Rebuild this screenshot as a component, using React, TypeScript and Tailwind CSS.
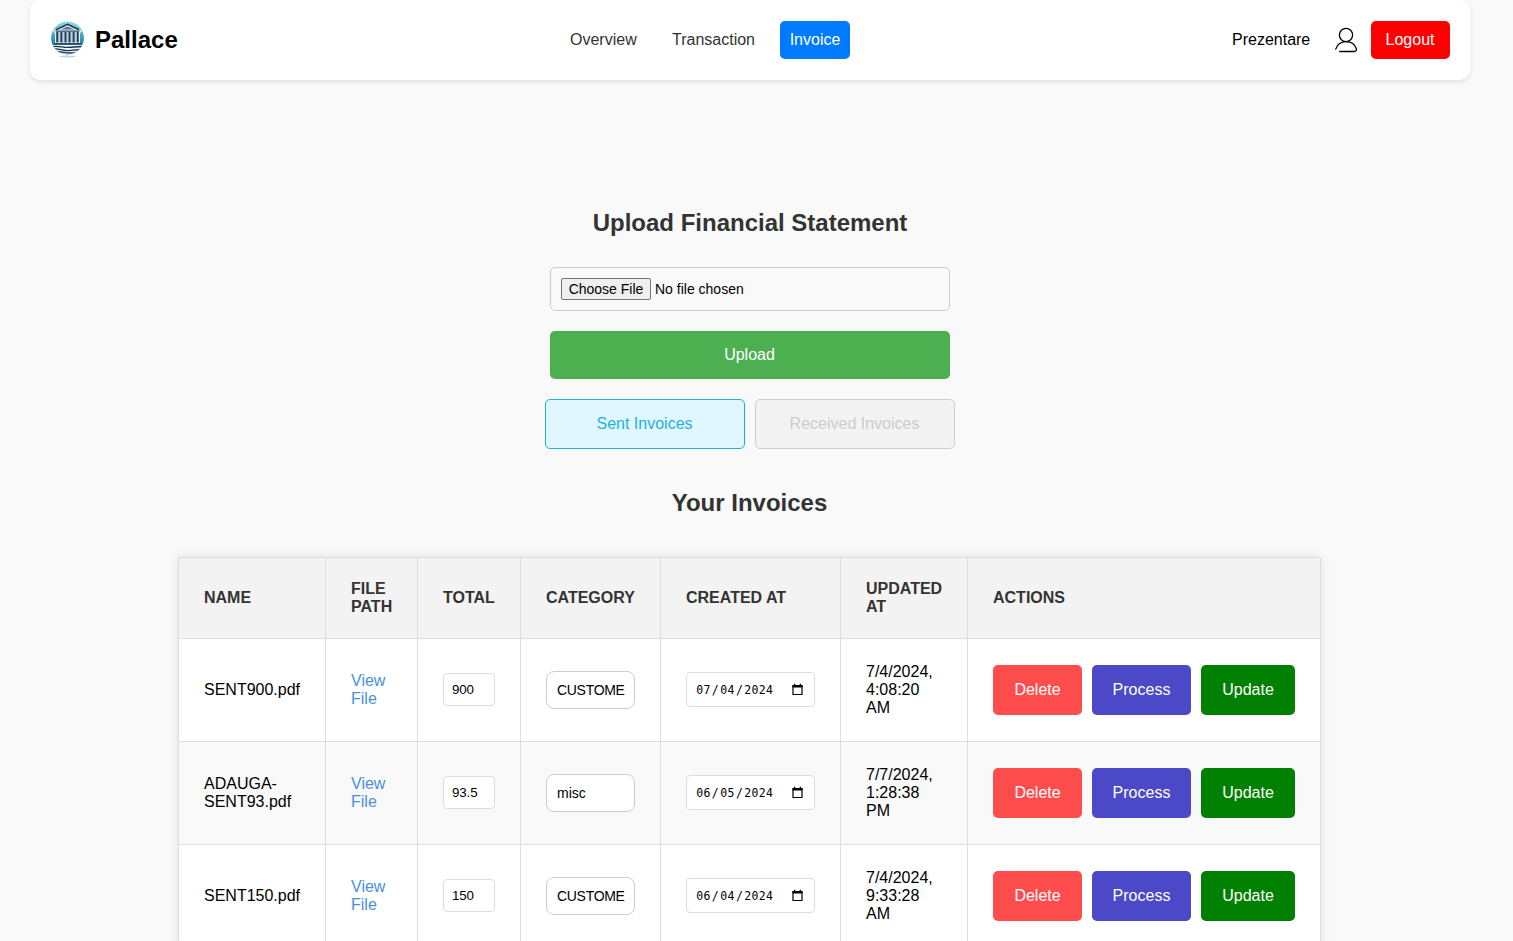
import type { ReactNode } from "react";

interface Invoice {
  name: string[];
  total: string;
  category: string;
  created: string;
  updated: string[];
}

const invoices: Invoice[] = [
  { name: ["SENT900.pdf"], total: "900", category: "CUSTOME", created: "07/04/2024", updated: ["7/4/2024,", "4:08:20", "AM"] },
  { name: ["ADAUGA-", "SENT93.pdf"], total: "93.5", category: "misc", created: "06/05/2024", updated: ["7/7/2024,", "1:28:38", "PM"] },
  { name: ["SENT150.pdf"], total: "150", category: "CUSTOME", created: "06/04/2024", updated: ["7/4/2024,", "9:33:28", "AM"] },
];

const headers: string[][] = [["NAME"], ["FILE", "PATH"], ["TOTAL"], ["CATEGORY"], ["CREATED AT"], ["UPDATED", "AT"], ["ACTIONS"]];

const columns = "grid grid-cols-[147px_92px_103px_140px_180px_127px_353px]";

function Lines({ items }: { items: string[] }) {
  return (
    <div>
      {items.map((line) => (
        <div key={line} className="whitespace-nowrap">{line}</div>
      ))}
    </div>
  );
}

function Cell({ children }: { children: ReactNode }) {
  return <div className="flex items-center border-t border-l border-[#ddd] pl-[25px]">{children}</div>;
}

function Logo() {
  return (
    <svg className="mb-[2px] h-[37px] w-[35px]" viewBox="0 0 35 37" fill="none">
      <defs>
        <linearGradient id="sky" x1="0" y1="0" x2="0" y2="1">
          <stop offset="0" stopColor="#8ce6e4" />
          <stop offset="0.35" stopColor="#4fb3c9" />
          <stop offset="0.7" stopColor="#23799f" />
          <stop offset="1" stopColor="#165478" />
        </linearGradient>
        <clipPath id="disc"><circle cx="17.5" cy="17" r="16.4" /></clipPath>
      </defs>
      <g clipPath="url(#disc)">
        <rect width="35" height="34" fill="url(#sky)" />
        <path d="M3.5 9.5 17.5 1.8l14 7.7v2H30V23H5V11.5H3.5z" fill="#e4f1f6" />
        <path d="M6 8.7 17.5 3.2 29 8.7" stroke="#1d3a54" strokeWidth="1.5" />
        <path d="M10.5 8.6 17.5 5.4l7 3.2z" fill="#56768c" />
        <path d="M5.5 10.2h24" stroke="#2b4a64" strokeWidth="1.2" />
        <path d="M7.3 11v10.5M11.4 11v10.5M15.5 11v10.5M19.5 11v10.5M23.6 11v10.5M27.7 11v10.5" stroke="#1f3d5a" strokeWidth="2.1" />
        <path d="M9.4 11v10.5M13.5 11v10.5M17.5 11v10.5M21.5 11v10.5M25.6 11v10.5" stroke="#a9c3d2" strokeWidth=".7" />
        <path d="M4 22h27v1.6H4z" fill="#2b4a67" />
        <path d="M0 24h35v10H0z" fill="#eef6f9" />
        <path d="M1 25.7c8-1.3 11 .8 17 .7s8-1.2 16-.9M2 28c8-1 11 2.2 17 1.6s8-1.200 13-.8M5 30.5c6-.5 9 2.5 20 1.300" stroke="#18354f" strokeWidth="1.4" />
      </g>
      <ellipse cx="17.5" cy="35.5" rx="8" ry="1" fill="#b8d7e1" />
    </svg>
  );
}

function UserIcon() {
  return (
    <svg className="h-[26px] w-[24px]" viewBox="0 0 24 26" fill="none" stroke="#000" strokeWidth="1.3" strokeLinecap="round">
      <circle cx="12" cy="8" r="6.6" />
      <path d="M1.7 22.1C3.3 17.4 7 14.6 12 14.6c5 0 8.8 2.9 10.3 6.9.6 1.7-.5 3-2.1 3H5.7" />
    </svg>
  );
}

function CalendarIcon() {
  return (
    <svg className="h-[13px] w-[11px]" viewBox="0 0 11 13" fill="none">
      <path d="M1 2.5h9v9H1z" stroke="#000" strokeWidth="1.2" strokeLinejoin="round" />
      <path d="M.5 2h10v2.5H.5zM2 .8h1.3V3H2zM7.7.8H9V3H7.7z" fill="#000" />
    </svg>
  );
}

function DateField({ value }: { value: string }) {
  const [month, day, year] = value.split("/");
  return (
    <div className="mb-px flex h-[35px] w-[129px] items-center justify-between rounded-[4px] border border-[#ddd] bg-white pr-[11px] pl-[8px] font-['DejaVu_Sans_Mono',monospace] text-[11.5px] tracking-[0.3px]">
      <span className="pt-px whitespace-nowrap">
        <span className="px-[1.2px]">{month}</span>/<span className="px-[1.2px]">{day}</span>/<span className="px-[1.2px]">{year}</span>
      </span>
      <CalendarIcon />
    </div>
  );
}

function Header() {
  return (
    <header className="mx-[30px] grid h-[80px] w-[1440px] grid-cols-[540px_1fr_238px] items-center rounded-[10px] bg-white shadow-[0_2px_4px_rgba(0,0,0,0.1)]">
      <div className="flex items-center pl-5">
        <Logo />
        <span className="ml-[10px] text-[24px] leading-[28px] font-bold">Pallace</span>
      </div>
      <nav className="flex items-center text-[#333]">
        <a className="w-[102px]">Overview</a>
        <a className="w-[108px]">Transaction</a>
        <a className="flex h-[38px] w-[70px] items-center justify-center rounded-[5px] bg-[#007bff] text-white">Invoice</a>
      </nav>
      <div className="flex items-center">
        <span className="w-[102px]">Prezentare</span>
        <UserIcon />
        <button className="ml-[13px] h-[38px] w-[79px] rounded-[5px] bg-[#f00] pr-px text-white">Logout</button>
      </div>
    </header>
  );
}

function UploadForm() {
  return (
    <section className="flex w-[1500px] flex-col items-center pt-[129px]">
      <h2 className="text-[24px] leading-[28px] font-bold text-[#333]">Upload Financial Statement</h2>
      <div className="mt-[30px] flex h-[44px] w-[400px] items-center rounded-[5px] border border-[#ccc] pl-[10px] text-[14px]">
        <button className="h-[22px] w-[90px] rounded-[2px] border border-[#767676] bg-[#efefef] leading-[19px] whitespace-nowrap">Choose File</button>
        <span className="ml-[4px]">No file chosen</span>
      </div>
      <button className="mt-5 h-[48px] w-[400px] rounded-[5px] bg-[#4caf50] pr-px text-white">Upload</button>
      <div className="mt-5 flex gap-[10px]">
        <button className="h-[50px] w-[200px] rounded-[5px] border border-[#1fb1dc] bg-[#e0f7ff] pr-px text-[#1fb1dc]">Sent Invoices</button>
        <button className="h-[50px] w-[200px] rounded-[5px] border border-[#ccc] bg-[#f3f3f3] pr-px text-[#ccc]">Received Invoices</button>
      </div>
    </section>
  );
}

function InvoiceTable() {
  return (
    <section className="flex w-[1500px] flex-col pt-[40px]">
      <h2 className="pr-px text-center text-[24px] leading-[28px] font-bold text-[#333]">Your Invoices</h2>
      <div className="mt-[40px] ml-[178px] w-[1143px] border-r border-b border-[#ddd] shadow-[0_0_10px_rgba(0,0,0,0.1)]">
        <div className={`${columns} h-[81px] bg-[#f3f3f3] font-bold text-[#333]`}>
          {headers.map((header) => (
            <Cell key={header[0]}><Lines items={header} /></Cell>
          ))}
        </div>
        {invoices.map((invoice, index) => (
          <div key={invoice.name[0]} className={`${columns} h-[103px] ${index % 2 ? "bg-[#f9f9f9]" : "bg-white"}`}>
            <Cell><Lines items={invoice.name} /></Cell>
            <Cell>
              <a className="text-[#4a90d9]"><Lines items={["View", "File"]} /></a>
            </Cell>
            <Cell>
              <div className="mb-px flex h-[33px] w-[52px] items-center rounded-[4px] border border-[#ddd] bg-white pl-[8px] text-[13.33px] tracking-[-0.1px]">{invoice.total}</div>
            </Cell>
            <Cell>
              <div className="flex h-[38px] w-[89px] items-center rounded-[8px] border border-[#ccc] bg-white pl-[10px] text-[14px]">
                <span className={invoice.category === "misc" ? "" : "tracking-[-0.3px]"}>{invoice.category}</span>
              </div>
            </Cell>
            <Cell><DateField value={invoice.created} /></Cell>
            <Cell><Lines items={invoice.updated} /></Cell>
            <Cell>
              <div className="flex gap-[10px] text-white">
                <button className="h-[50px] w-[89px] rounded-[5px] bg-[#ff4d4d]">Delete</button>
                <button className="h-[50px] w-[99px] rounded-[5px] bg-[#4b49c8]">Process</button>
                <button className="h-[50px] w-[94px] rounded-[5px] bg-[#008000]">Update</button>
              </div>
            </Cell>
          </div>
        ))}
      </div>
    </section>
  );
}

export default function App() {
  return (
    <div className="h-[941px] w-full overflow-hidden bg-[#f9f9f9] font-['Liberation_Sans',Arial,sans-serif] text-[16px] leading-[18px] text-black">
      <Header />
      <UploadForm />
      <InvoiceTable />
    </div>
  );
}
